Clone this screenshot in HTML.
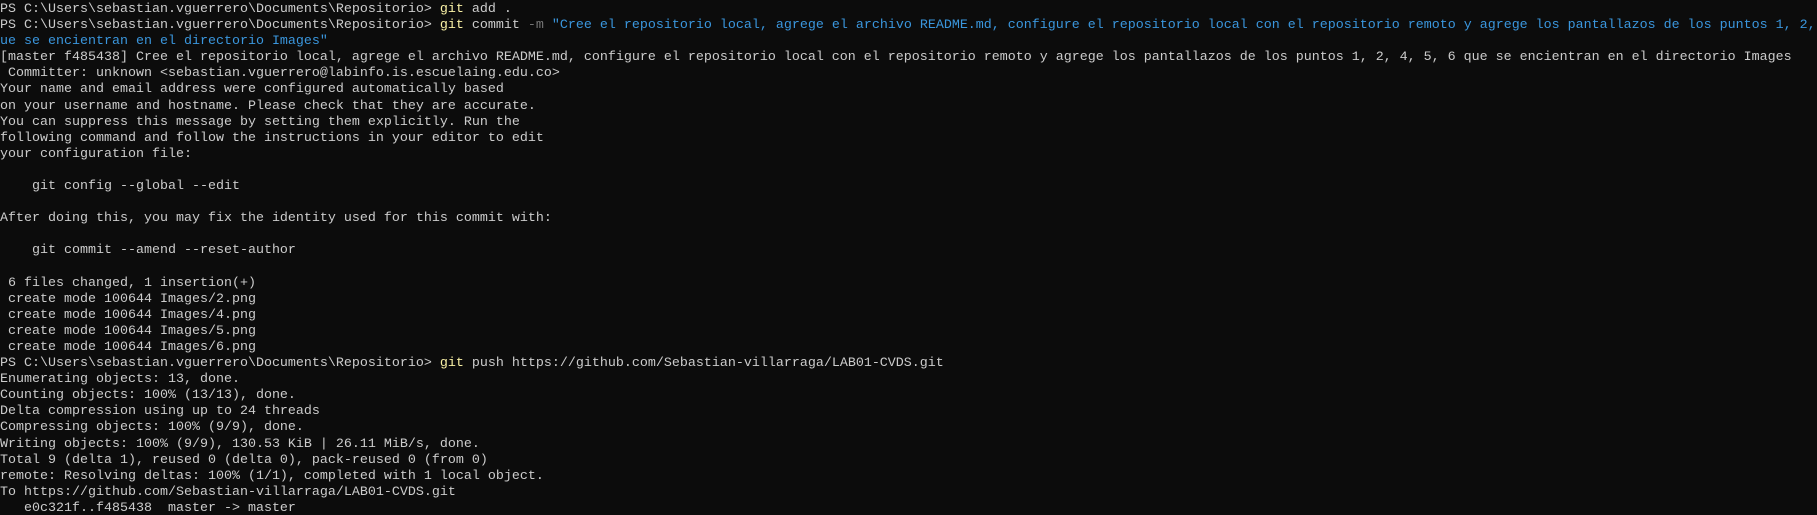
<!DOCTYPE html>
<html><head><meta charset="utf-8"><style>
html,body{margin:0;padding:0;background:#0c0c0c;width:1817px;height:515px;overflow:hidden}
pre{margin:0;padding:2px 0 0 0;font-family:"Liberation Mono",monospace;font-size:13.33px;line-height:16.1px;color:#cccccc;white-space:pre}
.y{color:#f9f1a5}.g{color:#767676}.b{color:#3a96dd}
</style></head><body><pre>PS C:\Users\sebastian.vguerrero\Documents\Repositorio&gt; <span class="y">git</span> add .
PS C:\Users\sebastian.vguerrero\Documents\Repositorio&gt; <span class="y">git</span> commit <span class="g">-m</span> <span class="b">"Cree el repositorio local, agrege el archivo README.md, configure el repositorio local con el repositorio remoto y agrege los pantallazos de los puntos 1, 2, </span>
<span class="b">ue se encientran en el directorio Images"</span>
[master f485438] Cree el repositorio local, agrege el archivo README.md, configure el repositorio local con el repositorio remoto y agrege los pantallazos de los puntos 1, 2, 4, 5, 6 que se encientran en el directorio Images
 Committer: unknown &lt;sebastian.vguerrero@labinfo.is.escuelaing.edu.co&gt;
Your name and email address were configured automatically based
on your username and hostname. Please check that they are accurate.
You can suppress this message by setting them explicitly. Run the
following command and follow the instructions in your editor to edit
your configuration file:

    git config --global --edit

After doing this, you may fix the identity used for this commit with:

    git commit --amend --reset-author

 6 files changed, 1 insertion(+)
 create mode 100644 Images/2.png
 create mode 100644 Images/4.png
 create mode 100644 Images/5.png
 create mode 100644 Images/6.png
PS C:\Users\sebastian.vguerrero\Documents\Repositorio&gt; <span class="y">git</span> push https://github.com/Sebastian-villarraga/LAB01-CVDS.git
Enumerating objects: 13, done.
Counting objects: 100% (13/13), done.
Delta compression using up to 24 threads
Compressing objects: 100% (9/9), done.
Writing objects: 100% (9/9), 130.53 KiB | 26.11 MiB/s, done.
Total 9 (delta 1), reused 0 (delta 0), pack-reused 0 (from 0)
remote: Resolving deltas: 100% (1/1), completed with 1 local object.
To https://github.com/Sebastian-villarraga/LAB01-CVDS.git
   e0c321f..f485438  master -&gt; master
</pre></body></html>
